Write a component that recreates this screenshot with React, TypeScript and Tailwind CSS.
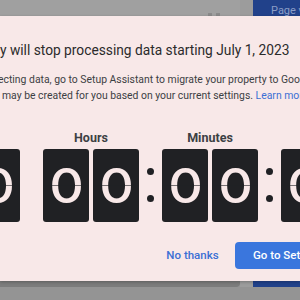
const font = { fontFamily: "Roboto, 'Liberation Sans', sans-serif" };

function DigitCard({ value }: { value: string }) {
  return (
    <div className="relative flex h-[73px] w-[46px] shrink-0 items-center justify-center rounded-[3px] bg-[#202124]">
      <span
        className="scale-x-[1.12] text-[48px] font-medium leading-none text-[#f8e8e8]"
        style={{ fontFamily: "Inter, Roboto, sans-serif" }}
      >
        {value}
      </span>
      <div className="absolute left-0 right-0 top-[36px] h-px bg-[#202124]/60" />
    </div>
  );
}

function Group({ label, digits }: { label: string; digits: string }) {
  return (
    <div className="flex shrink-0 flex-col items-center">
      <div className="h-4 whitespace-nowrap text-[12.5px] font-bold leading-4 text-[#3c4043]">{label}</div>
      <div className="mt-[3px] flex gap-[4px]">
        {digits.split("").map((d, i) => (
          <DigitCard key={i} value={d} />
        ))}
      </div>
    </div>
  );
}

function Colon({ show = true }: { show?: boolean }) {
  return (
    <div className="flex w-[23px] shrink-0 flex-col items-center self-end pb-[20px]">
      {show && (
        <>
          <div className="h-[7px] w-[7px] rounded-full bg-[#202124]" />
          <div className="mt-[20px] h-[7px] w-[7px] rounded-full bg-[#202124]" />
        </>
      )}
    </div>
  );
}

export default function App() {
  return (
    <div className="relative h-[300px] w-[300px] overflow-hidden bg-[#949494]" style={font}>
      {/* page behind the dialog */}
      <div className="flex h-[287px]">
        <div className="flex w-[240px] shrink-0 flex-col rounded-br-[4px] bg-[#7c7c7c]">
          <div className="relative h-4 bg-[#a0a0a0]">
            <div className="absolute left-[208px] top-[13px] h-[3px] w-[4px] bg-[#8a8a8a]" />
            <div className="absolute left-[216px] top-[13px] h-[3px] w-[4px] bg-[#8a8a8a]" />
          </div>
        </div>
        <div className="w-[13px] shrink-0 bg-[#9c9c9c]" />
        <div className="min-w-0 flex-1 overflow-hidden bg-[#21418a] pl-[18px] pt-[4px]">
          <div className="whitespace-nowrap text-[11px] leading-[14px] text-[#8b9dc6]">Page views</div>
        </div>
      </div>

      {/* dialog */}
      <div className="absolute left-0 top-[16px] h-[265px] w-full overflow-hidden bg-[#f8e8e8] shadow-[0_1px_3px_rgba(0,0,0,0.25)]">
        <div className="pt-[24px] whitespace-nowrap text-[13.75px] leading-[20px] text-[#2b2b2b]">
          y will stop processing data starting July 1, 2023
        </div>
        <div className="mt-[12px] whitespace-nowrap text-[10.4px] leading-4 text-[#3c4043]">
          <div className="-ml-[2px]">ecting data, go to Setup Assistant to migrate your property to Google Analytics 4</div>
          <div className="ml-[2px]">
            may be created for you based on your current settings. <span className="text-[#3b6fd4]">Learn more</span>
          </div>
        </div>

        <div className="mt-[26px] -ml-[76px] flex">
          <Group label="Days" digits="00" />
          <Colon show={false} />
          <Group label="Hours" digits="00" />
          <Colon />
          <Group label="Minutes" digits="00" />
          <Colon />
          <Group label="Seconds" digits="00" />
        </div>

        <div className="mt-[20px] flex items-center pl-[158px]">
          <button type="button" className="h-[27px] w-[69px] shrink-0 whitespace-nowrap text-[11.5px] font-medium text-[#3b6fd4]">
            No thanks
          </button>
          <button
            type="button"
            className="ml-[8px] h-[27px] shrink-0 whitespace-nowrap rounded-[4px] bg-[#3a76dd] px-[18px] text-[11.5px] font-medium text-white"
          >
            Go to Setup Assistant
          </button>
        </div>
      </div>
    </div>
  );
}
